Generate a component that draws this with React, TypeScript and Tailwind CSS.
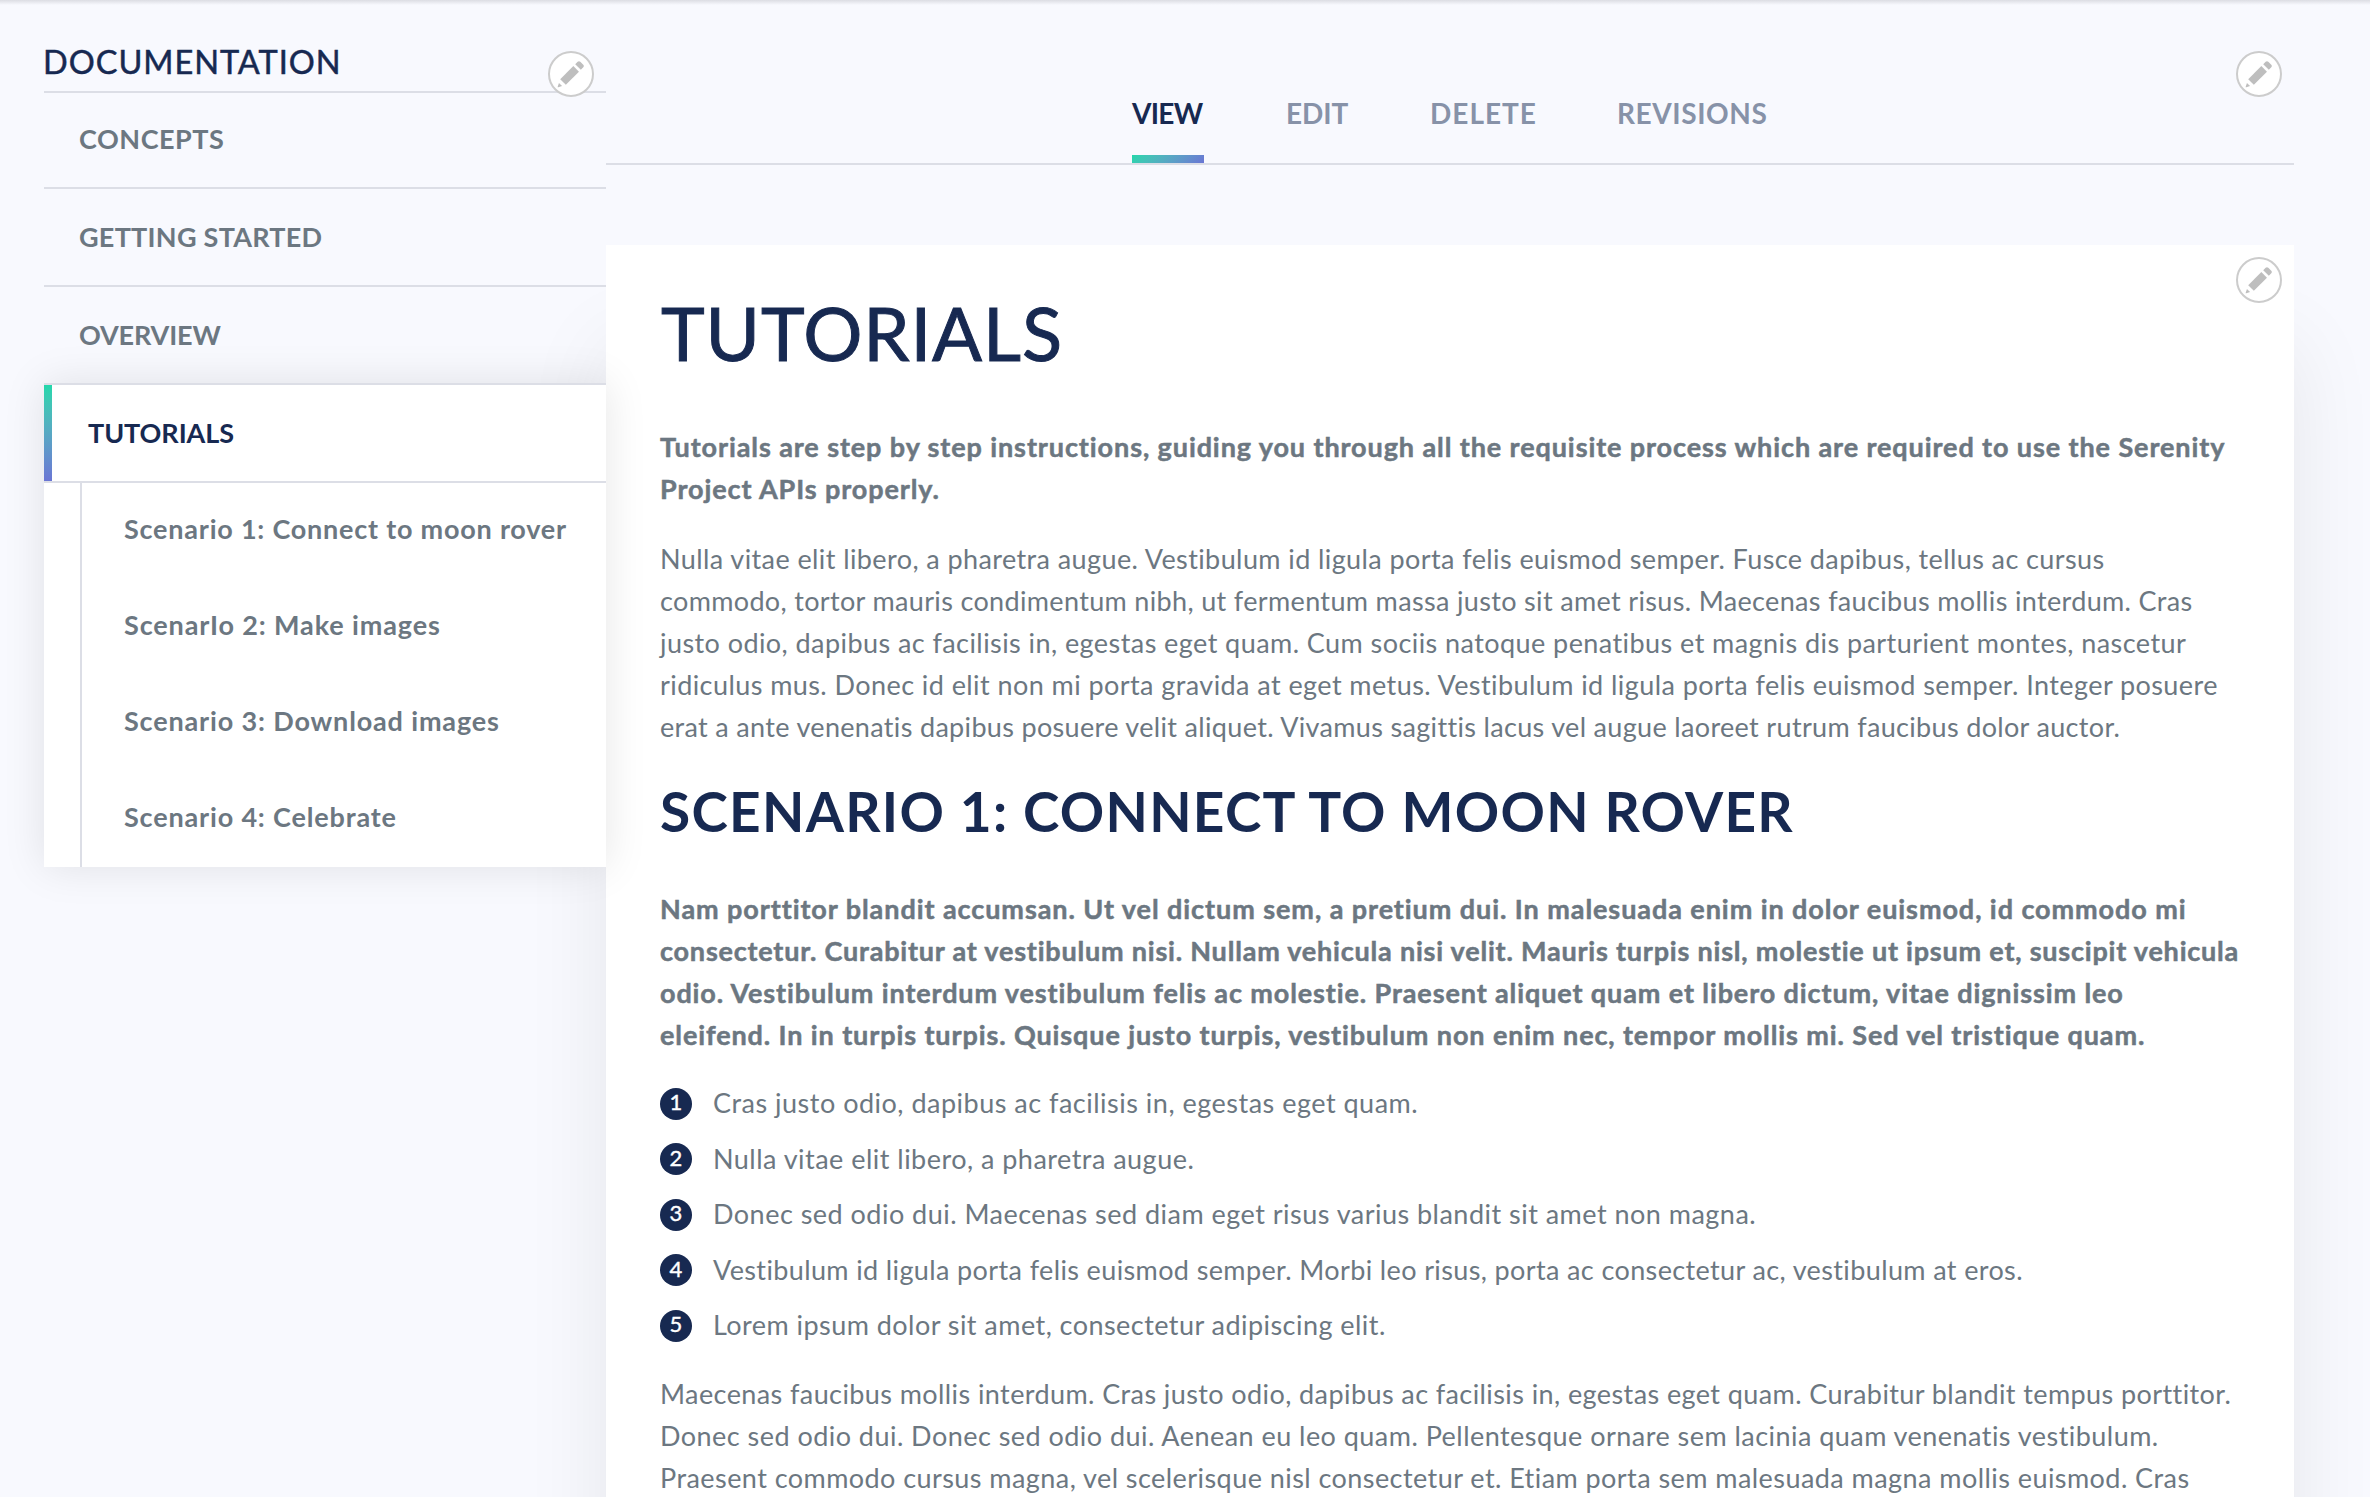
import React from "react";

type TextLine = { text: string; tracking: string };

const navItems: TextLine[] = [
  { text: "CONCEPTS", tracking: "tracking-[0.526px] leading-[92px]" },
  { text: "GETTING STARTED", tracking: "tracking-[0.262px] leading-[95px]" },
  { text: "OVERVIEW", tracking: "tracking-[-0.156px] leading-[95px]" },
];

const scenarios: TextLine[] = [
  { text: "Scenario 1: Connect to moon rover", tracking: "tracking-[0.779px]" },
  { text: "ScenarIo 2: Make images", tracking: "tracking-[0.876px]" },
  { text: "Scenario 3: Download images", tracking: "tracking-[0.846px]" },
  { text: "Scenario 4: Celebrate", tracking: "tracking-[0.832px]" },
];

const tabs = [
  { text: "VIEW", box: "w-[72px]", tracking: "tracking-[-0.7px]", active: true },
  { text: "EDIT", box: "w-[62px]", tracking: "tracking-[-0.065px]", active: false },
  { text: "DELETE", box: "w-[105px]", tracking: "tracking-[1px]", active: false },
  { text: "REVISIONS", box: "w-[150px]", tracking: "tracking-[0.6px]", active: false },
];

const lead: TextLine[] = [
  {
    text: "Tutorials are step by step instructions, guiding you through all the requisite process which are required to use the Serenity",
    tracking: "tracking-[0.905px]",
  },
  { text: "Project APIs properly.", tracking: "tracking-[0.9px]" },
];

const intro: TextLine[] = [
  {
    text: "Nulla vitae elit libero, a pharetra augue. Vestibulum id ligula porta felis euismod semper. Fusce dapibus, tellus ac cursus",
    tracking: "tracking-[0.407px]",
  },
  {
    text: "commodo, tortor mauris condimentum nibh, ut fermentum massa justo sit amet risus. Maecenas faucibus mollis interdum. Cras",
    tracking: "tracking-[0.342px]",
  },
  {
    text: "justo odio, dapibus ac facilisis in, egestas eget quam. Cum sociis natoque penatibus et magnis dis parturient montes, nascetur",
    tracking: "tracking-[0.434px]",
  },
  {
    text: "ridiculus mus. Donec id elit non mi porta gravida at eget metus. Vestibulum id ligula porta felis euismod semper. Integer posuere",
    tracking: "tracking-[0.426px]",
  },
  {
    text: "erat a ante venenatis dapibus posuere velit aliquet. Vivamus sagittis lacus vel augue laoreet rutrum faucibus dolor auctor.",
    tracking: "tracking-[0.33px]",
  },
];

const scenarioLead: TextLine[] = [
  {
    text: "Nam porttitor blandit accumsan. Ut vel dictum sem, a pretium dui. In malesuada enim in dolor euismod, id commodo mi",
    tracking: "tracking-[0.93px]",
  },
  {
    text: "consectetur. Curabitur at vestibulum nisi. Nullam vehicula nisi velit. Mauris turpis nisl, molestie ut ipsum et, suscipit vehicula",
    tracking: "tracking-[0.792px]",
  },
  {
    text: "odio. Vestibulum interdum vestibulum felis ac molestie. Praesent aliquet quam et libero dictum, vitae dignissim leo",
    tracking: "tracking-[0.89px]",
  },
  {
    text: "eleifend. In in turpis turpis. Quisque justo turpis, vestibulum non enim nec, tempor mollis mi. Sed vel tristique quam.",
    tracking: "tracking-[0.893px]",
  },
];

const steps: TextLine[] = [
  { text: "Cras justo odio, dapibus ac facilisis in, egestas eget quam.", tracking: "tracking-[0.5px]" },
  { text: "Nulla vitae elit libero, a pharetra augue.", tracking: "tracking-[0.475px]" },
  {
    text: "Donec sed odio dui. Maecenas sed diam eget risus varius blandit sit amet non magna.",
    tracking: "tracking-[0.48px]",
  },
  {
    text: "Vestibulum id ligula porta felis euismod semper. Morbi leo risus, porta ac consectetur ac, vestibulum at eros.",
    tracking: "tracking-[0.375px]",
  },
  { text: "Lorem ipsum dolor sit amet, consectetur adipiscing elit.", tracking: "tracking-[0.454px]" },
];

const closing: TextLine[] = [
  {
    text: "Maecenas faucibus mollis interdum. Cras justo odio, dapibus ac facilisis in, egestas eget quam. Curabitur blandit tempus porttitor.",
    tracking: "tracking-[0.41px]",
  },
  {
    text: "Donec sed odio dui. Donec sed odio dui. Aenean eu leo quam. Pellentesque ornare sem lacinia quam venenatis vestibulum.",
    tracking: "tracking-[0.464px]",
  },
  {
    text: "Praesent commodo cursus magna, vel scelerisque nisl consectetur et. Etiam porta sem malesuada magna mollis euismod. Cras",
    tracking: "tracking-[0.442px]",
  },
];

function Lines({ lines }: { lines: TextLine[] }) {
  return (
    <>
      {lines.map((line) => (
        <span key={line.text} className={`block ${line.tracking}`}>
          {line.text}
        </span>
      ))}
    </>
  );
}

function EditButton({ className }: { className: string }) {
  return (
    <button
      aria-label="Edit"
      className={`absolute flex size-[46px] items-center justify-center rounded-full border-2 border-[#cccccc] bg-white ${className}`}
    >
      <svg viewBox="0 0 16 16" className="size-[30px]" fill="#bebebe">
        <path d="M14.545 3.042l-1.586-1.585c-.389-.389-1.025-.389-1.414 0l-1.293 1.293 3 3 1.293-1.293c.389-.389.389-1.026 0-1.415z" />
        <rect x="5.129" y="3.8" width="4.243" height="9.899" transform="matrix(-.707 -.707 .707 -.707 6.189 20.064)" />
        <path d="M.908 14.775c-.087.262.055.397.316.312l2.001-.667-1.65-1.646-.667 2.001z" />
      </svg>
    </button>
  );
}

function Sidebar() {
  return (
    <aside className="relative z-10 ml-11 w-[562px] shrink-0 pt-[30px] text-[27px] font-bold">
      <h2 className="h-[61px] text-[32.5px] leading-[63px] font-normal tracking-[0.98px] text-[#172951] [-webkit-text-stroke:0.5px_#172951] -indent-px">
        DOCUMENTATION
      </h2>
      <EditButton className="top-[51px] right-3" />
      <ul>
        {navItems.map((item, i) => (
          <li
            key={item.text}
            className={`border-t-2 border-[#dcdee6] pl-[35px] ${i === 0 ? "h-[96px]" : "h-[98px]"} ${item.tracking}`}
          >
            {item.text}
          </li>
        ))}
        <li className="bg-white shadow-[0_0_40px_rgba(0,0,0,0.1)]">
          <div className="flex h-[100px] border-y-2 border-[#dcdee6]">
            <div className="w-2 bg-linear-to-b from-[#22d7ab] to-[#6a75d4]" />
            <span className="pl-9 leading-[95px] tracking-[-0.07px] text-[#172951]">TUTORIALS</span>
          </div>
          <ul className="ml-9 border-l-2 border-[#dcdee6]">
            {scenarios.map((s) => (
              <li key={s.text} className={`h-24 pl-[42px] leading-[91px] ${s.tracking}`}>
                {s.text}
              </li>
            ))}
          </ul>
        </li>
      </ul>
    </aside>
  );
}

export default function App() {
  return (
    <div className="relative flex h-[1497px] w-[2370px] overflow-hidden bg-[#f8f9fe] font-[Lato,sans-serif] text-[27px] leading-[42px] whitespace-nowrap text-[#6c7781]">
      <div className="absolute inset-x-0 top-0 h-[5px] bg-linear-to-b from-[#dcdde3] to-[#f8f9fe]" />
      <Sidebar />
      <main className="relative w-[1688px] shrink-0">
        <EditButton className="top-[51px] right-3" />
        <nav className="flex h-[165px] gap-[82px] border-b-2 border-[#dcdee6] pl-[526px] text-[28px] font-bold">
          {tabs.map((tab) => (
            <div
              key={tab.text}
              className={`flex flex-col justify-end ${tab.box} ${tab.tracking} ${tab.active ? "text-[#172951]" : "text-[#8792a8]"}`}
            >
              <span className="h-[62px] leading-[40px]">{tab.text}</span>
              <span className={`h-2 ${tab.active ? "bg-linear-135 from-[#22d7ab] to-[#6a75d4]" : ""}`} />
            </div>
          ))}
        </nav>
        <article className="relative mt-20 h-[1400px] bg-white pt-[48px] pl-[54px] shadow-[0_100px_80px_rgba(0,0,0,0.08)]">
          <EditButton className="top-3 right-3" />
          <h1 className="pl-px text-[74px] leading-[80px] tracking-[0.892px] text-[#172951] [-webkit-text-stroke:1px_#172951]">
            TUTORIALS
          </h1>
          <p className="mt-[53px] font-bold [-webkit-text-stroke:0.5px_#6c7781]">
            <Lines lines={lead} />
          </p>
          <p className="mt-7">
            <Lines lines={intro} />
          </p>
          <h2 className="mt-[33px] text-[55px] leading-[60px] font-bold tracking-[1.28px] text-[#172951]">
            SCENARIO 1: CONNECT TO MOON ROVER
          </h2>
          <p className="mt-[47px] font-bold [-webkit-text-stroke:0.5px_#6c7781]">
            <Lines lines={scenarioLead} />
          </p>
          <ol className="mt-[26px] flex flex-col gap-[13.6px]">
            {steps.map((step, i) => (
              <li key={step.text} className="flex h-[42px] items-center">
                <span className="mt-px mr-[21px] flex size-8 items-center justify-center rounded-full bg-[#172951] pb-[3px] text-[22px] leading-none text-white [-webkit-text-stroke:0.4px_white]">
                  {i + 1}
                </span>
                <span className={step.tracking}>{step.text}</span>
              </li>
            ))}
          </ol>
          <p className="mt-[27px]">
            <Lines lines={closing} />
          </p>
        </article>
      </main>
    </div>
  );
}
